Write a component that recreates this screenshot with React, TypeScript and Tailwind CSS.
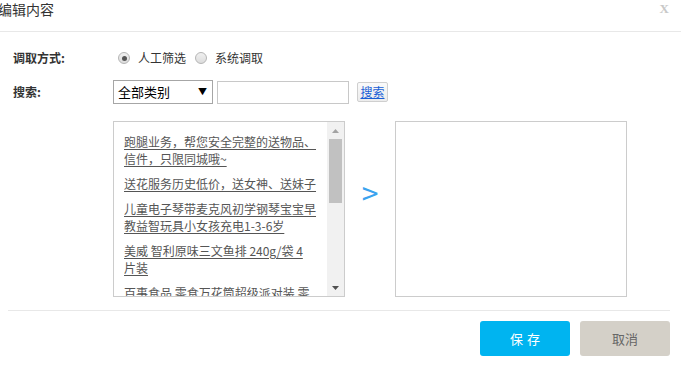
import React from 'react';

const ITEMS: string[][] = [
  ['跑腿业务，帮您安全完整的送物品、', '信件，只限同城哦~'],
  ['送花服务历史低价，送女神、送妹子'],
  ['儿童电子琴带麦克风初学钢琴宝宝早', '教益智玩具小女孩充电1-3-6岁'],
  ['美威 智利原味三文鱼排 240g/袋 4', '片装'],
  ['百事食品 零食万花筒超级派对装 零', '食大礼包'],
];

const Radio: React.FC<{ checked?: boolean }> = ({ checked }) => (
  <span className="w-[12px] h-[12px] rounded-full border border-[#b5b5b5] bg-gradient-to-b from-[#f0f0f0] to-[#dcdcdc] flex items-center justify-center">
    {checked && <span className="w-[5px] h-[5px] rounded-full bg-[#555]" />}
  </span>
);

const App: React.FC = () => {
  return (
    <div className="w-[681px] h-[366px] bg-white overflow-hidden text-[#333] font-['Noto_Sans_CJK_SC','Microsoft_YaHei',sans-serif]">
      {/* header */}
      <div className="h-[32px] border-b border-[#e8e8e8] flex justify-between">
        <div className="-ml-[2px] text-[14px] leading-[18px]">编辑内容</div>
        <div className="mr-[12px] mt-[2px] text-[13px] leading-[14px] font-bold text-[#c8c8c8] font-['Liberation_Serif',serif]">X</div>
      </div>

      <div className="pl-[13px]">
        <div className="mt-[16px] h-[20px] flex items-center text-[12px]">
          <div className="w-[100px] font-bold">调取方式:</div>
          <div className="ml-[5px] flex items-center">
            <Radio checked />
            <span className="ml-[8px]">人工筛选</span>
            <span className="ml-[9px]"><Radio /></span>
            <span className="ml-[8px]">系统调取</span>
          </div>
        </div>

        <div className="mt-[12px] h-[24px] flex items-center text-[12px]">
          <div className="w-[100px] font-bold">搜索:</div>
          <div className="w-[100px] h-[24px] border border-[#a6a6a6] flex items-center justify-between pl-[4px] pr-[5px] text-[13px] text-black">
            <span>全部类别</span>
            <span className="text-[9px]">▼</span>
          </div>
          <div className="ml-[4px] w-[132px] h-[23px] border border-[#c8c8c8]" />
          <button className="ml-[8px] w-[31px] h-[20px] border border-[#cfcfcf] rounded-[2px] bg-gradient-to-b from-[#fafafa] to-[#ececec] text-[12px] leading-[16px] text-[#1a5fd6] underline">
            搜索
          </button>
        </div>

        <div className="mt-[17px] ml-[100px] flex">
          <div className="w-[232px] h-[176px] border border-[#cccccc] flex overflow-hidden">
            <div className="flex-1 pl-[10px] pt-[11px] overflow-hidden flex flex-col gap-[8px]">
              {ITEMS.map((lines, i) => (
                <div key={i} className="text-[12px] leading-[17px] text-[#555] underline underline-offset-2 whitespace-nowrap">
                  {lines.map((l, j) => (
                    <div key={j}>{l}</div>
                  ))}
                </div>
              ))}
            </div>
            <div className="w-[17px] bg-[#f1f1f1] flex flex-col">
              <div className="h-[17px] flex items-center justify-center">
                <svg width="7" height="4" viewBox="0 0 7 4"><path d="M0 4 L3.5 0 L7 4 Z" fill="#a3a3a3" /></svg>
              </div>
              <div className="flex-1 px-[2px]">
                <div className="h-[64px] bg-[#c1c1c1]" />
              </div>
              <div className="h-[17px] flex items-center justify-center">
                <svg width="7" height="4" viewBox="0 0 7 4"><path d="M0 0 L7 0 L3.5 4 Z" fill="#505050" /></svg>
              </div>
            </div>
          </div>

          <div className="w-[50px] flex justify-center pt-[56px]">
            <span className="text-[30px] leading-[30px] text-[#3aa3ef]">&gt;</span>
          </div>

          <div className="w-[232px] h-[176px] border border-[#cccccc]" />
        </div>
      </div>

      <div className="mt-[13px] ml-[8px] w-[662px] h-px bg-[#e8e8e8]" />

      <div className="mt-[10px] flex justify-end pr-[11px] gap-[10px] text-[13px]">
        <button className="w-[90px] h-[35px] rounded-[3px] bg-[#00b4f0] text-white tracking-[4px] pl-[4px]">保存</button>
        <button className="w-[90px] h-[35px] rounded-[3px] bg-[#d4d0c8] text-[#666]">取消</button>
      </div>
    </div>
  );
};

export default App;
